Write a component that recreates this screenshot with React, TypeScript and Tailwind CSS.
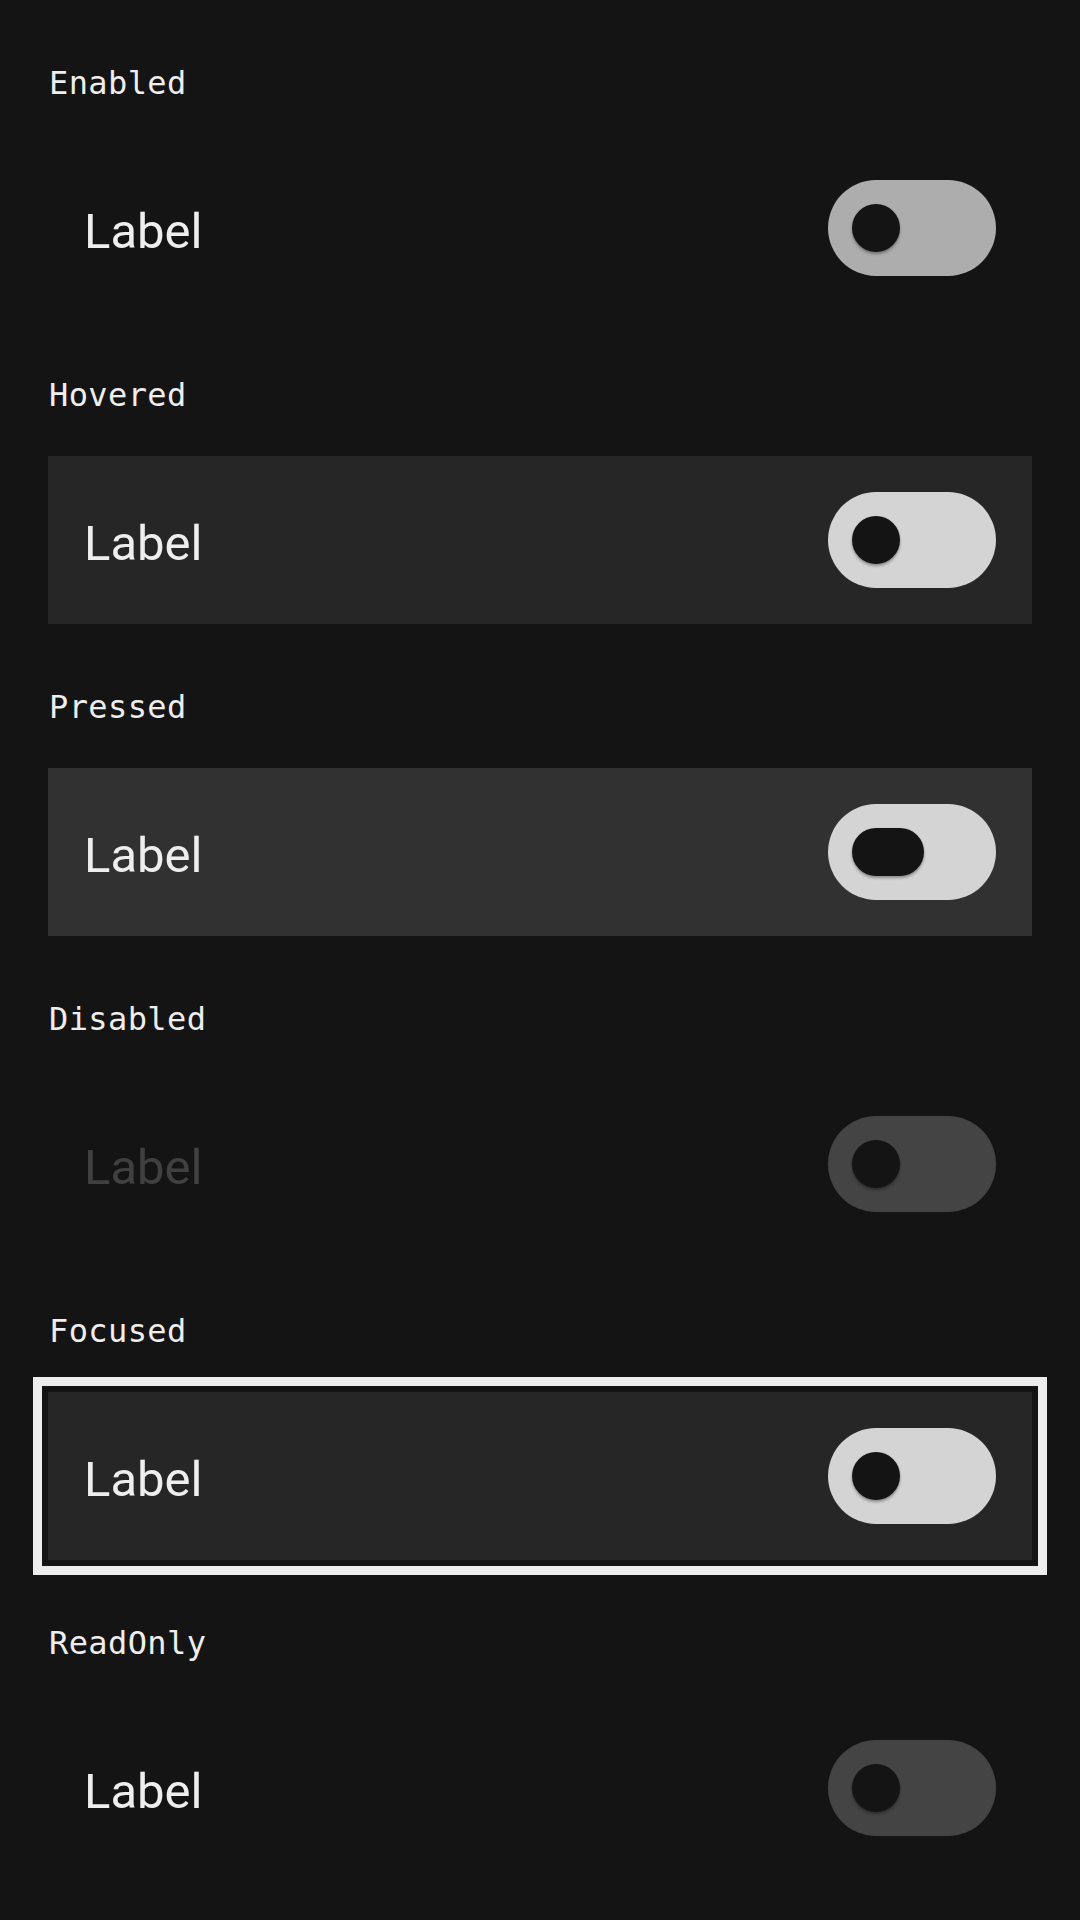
import React from "react";

type Variant = "enabled" | "hovered" | "pressed" | "disabled" | "focused" | "readonly";

const sections: { title: string; variant: Variant }[] = [
  { title: "Enabled", variant: "enabled" },
  { title: "Hovered", variant: "hovered" },
  { title: "Pressed", variant: "pressed" },
  { title: "Disabled", variant: "disabled" },
  { title: "Focused", variant: "focused" },
  { title: "ReadOnly", variant: "readonly" },
];

function Row({ variant }: { variant: Variant }) {
  const rowBg =
    variant === "hovered" || variant === "focused"
      ? "bg-[#262626]"
      : variant === "pressed"
      ? "bg-[#313131]"
      : "bg-transparent";
  const ring =
    variant === "focused"
      ? "outline-[9px] outline-solid outline-[#eeeeee] outline-offset-[6px]"
      : "";
  const labelColor = variant === "disabled" ? "text-[#404040]" : "text-[#eeeeee]";
  const trackColor =
    variant === "enabled"
      ? "bg-[#adadad]"
      : variant === "disabled" || variant === "readonly"
      ? "bg-[#444444]"
      : "bg-[#d4d4d4]";
  const knobW = variant === "pressed" ? "w-[72px]" : "w-[48px]";
  return (
    <div
      className={`h-[168px] mx-[48px] flex items-center justify-between pl-[36px] pr-[36px] ${rowBg} ${ring}`}
    >
      <span
        className={`pt-[7px] text-[49px] leading-none ${labelColor}`}
        style={{ fontFamily: "Roboto, 'Noto Sans', sans-serif" }}
      >
        Label
      </span>
      <div className={`w-[168px] h-[96px] rounded-full flex items-center pl-[24px] ${trackColor}`}>
        <div
          className={`${knobW} h-[48px] rounded-full bg-[#141414] shadow-[0_2px_3px_rgba(0,0,0,0.35)]`}
        />
      </div>
    </div>
  );
}

export default function App() {
  return (
    <div className="w-[1080px] h-[1920px] bg-[#141414] overflow-hidden">
      {sections.map((s) => (
        <div key={s.title} className="h-[312px]">
          <div
            className="pt-[65px] h-[144px] pl-[49px] text-[32px] leading-[37px] tracking-[0.4px] text-[#eeeeee]"
            style={{ fontFamily: "'DejaVu Sans Mono', monospace" }}
          >
            {s.title}
          </div>
          <Row variant={s.variant} />
        </div>
      ))}
    </div>
  );
}
